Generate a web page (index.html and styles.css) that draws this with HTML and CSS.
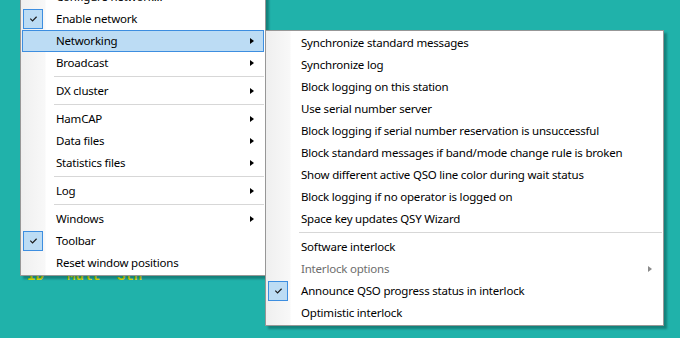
FILE: index.html
```html
<!DOCTYPE html>
<html lang="en">
<head>
  <meta charset="UTF-8">
  <title>Network menu</title>
  <link rel="stylesheet" href="styles.css">
</head>
<body>

<!-- log window behind the menus -->
<div class="log">
  <span class="col-id">ID</span><span class="col-mult">Mult</span><span class="col-stn">Stn</span>
</div>

<!-- main popup menu -->
<div class="menu main">
  <div class="item"><span class="icon"></span><span class="label">Configure network...</span></div>
  <div class="item"><span class="icon checked"><svg viewBox="0 0 20 20"><path d="M7 9.5 L9.5 12 L14 7.5"/></svg></span><span class="label">Enable network</span></div>
  <div class="item active"><span class="icon"></span><span class="label">Networking</span><span class="arrow"></span></div>
  <div class="item"><span class="icon"></span><span class="label">Broadcast</span><span class="arrow"></span></div>
  <div class="sep"></div>
  <div class="item"><span class="icon"></span><span class="label">DX cluster</span><span class="arrow"></span></div>
  <div class="sep"></div>
  <div class="item"><span class="icon"></span><span class="label">HamCAP</span><span class="arrow"></span></div>
  <div class="item"><span class="icon"></span><span class="label">Data files</span><span class="arrow"></span></div>
  <div class="item"><span class="icon"></span><span class="label">Statistics files</span><span class="arrow"></span></div>
  <div class="sep"></div>
  <div class="item"><span class="icon"></span><span class="label">Log</span><span class="arrow"></span></div>
  <div class="sep"></div>
  <div class="item"><span class="icon"></span><span class="label">Windows</span><span class="arrow"></span></div>
  <div class="item"><span class="icon checked"><svg viewBox="0 0 20 20"><path d="M7 9.5 L9.5 12 L14 7.5"/></svg></span><span class="label">Toolbar</span></div>
  <div class="item"><span class="icon"></span><span class="label">Reset window positions</span></div>
</div>

<!-- Networking submenu -->
<div class="menu sub">
  <div class="item"><span class="icon"></span><span class="label">Synchronize standard messages</span></div>
  <div class="item"><span class="icon"></span><span class="label">Synchronize log</span></div>
  <div class="item"><span class="icon"></span><span class="label">Block logging on this station</span></div>
  <div class="item"><span class="icon"></span><span class="label">Use serial number server</span></div>
  <div class="item"><span class="icon"></span><span class="label">Block logging if serial number reservation is unsuccessful</span></div>
  <div class="item"><span class="icon"></span><span class="label">Block standard messages if band/mode change rule is broken</span></div>
  <div class="item"><span class="icon"></span><span class="label">Show different active QSO line color during wait status</span></div>
  <div class="item"><span class="icon"></span><span class="label">Block logging if no operator is logged on</span></div>
  <div class="item"><span class="icon"></span><span class="label">Space key updates QSY Wizard</span></div>
  <div class="sep"></div>
  <div class="item"><span class="icon"></span><span class="label">Software interlock</span></div>
  <div class="item disabled"><span class="icon"></span><span class="label">Interlock options</span><span class="arrow"></span></div>
  <div class="item"><span class="icon checked"><svg viewBox="0 0 20 20"><path d="M7 9.5 L9.5 12 L14 7.5"/></svg></span><span class="label">Announce QSO progress status in interlock</span></div>
  <div class="item"><span class="icon"></span><span class="label">Optimistic interlock</span></div>
</div>

</body>
</html>
```

FILE: styles.css
```css
html, body {
  margin: 0;
  padding: 0;
}

body {
  width: 680px;
  height: 338px;
  overflow: hidden;
  position: relative;
  background-color: #20b2aa;
  font-family: "Noto Sans", "Open Sans", sans-serif;
  font-size: 11.5px;
  letter-spacing: -0.2px;
  color: #000;
}

/* log text behind the menu */
.log {
  padding-top: 269px;
  padding-left: 27px;
  display: flex;
  font-family: "Liberation Mono", "DejaVu Sans Mono", monospace;
  font-size: 14px;
  line-height: 14px;
  letter-spacing: 0;
  font-weight: bold;
  color: #e8e800;
}

.col-id { width: 40px; }
.col-mult { width: 50px; }

/* popup menus */
.menu {
  position: absolute;
  box-sizing: border-box;
  border: 1px solid #979797;
  padding: 1px 0;
  background: linear-gradient(90deg, #efefef 0, #f8f8f8 24px, #ffffff 25px);
  box-shadow: 3px 3px 2px rgba(0, 40, 40, 0.35);
}

.main {
  left: 20px;
  top: -16px;
  width: 246px;
}

.sub {
  left: 265px;
  top: 30px;
  width: 399px;
}

.item {
  display: flex;
  align-items: center;
  height: 22px;
  margin: 0 1px;
  box-sizing: border-box;
  border: 1px solid transparent;
}

.item.active {
  background-color: #bcdcf4;
  border-color: #3d8ee0;
}

.icon {
  width: 20px;
  height: 20px;
  flex: none;
  box-sizing: border-box;
}

.icon.checked {
  background-color: #bcdcf4;
  border: 1px solid #3d8ee0;
}

.icon svg {
  display: block;
  width: 18px;
  height: 18px;
}

.icon svg path {
  fill: none;
  stroke: #1a1a1a;
  stroke-width: 1.3;
}

.label {
  flex: 1;
  margin-left: 13px;
  margin-bottom: 2px;
  white-space: nowrap;
}

.arrow {
  width: 0;
  height: 0;
  margin-right: 9px;
  border-top: 3.5px solid transparent;
  border-bottom: 3.5px solid transparent;
  border-left: 4px solid #000;
}

.disabled .label { color: #6d6d6d; }
.disabled .arrow { border-left-color: #8a8a8a; }

.sep {
  height: 1px;
  margin: 2px 1px 3px 33px;
  background-color: #d7d7d7;
}
```
